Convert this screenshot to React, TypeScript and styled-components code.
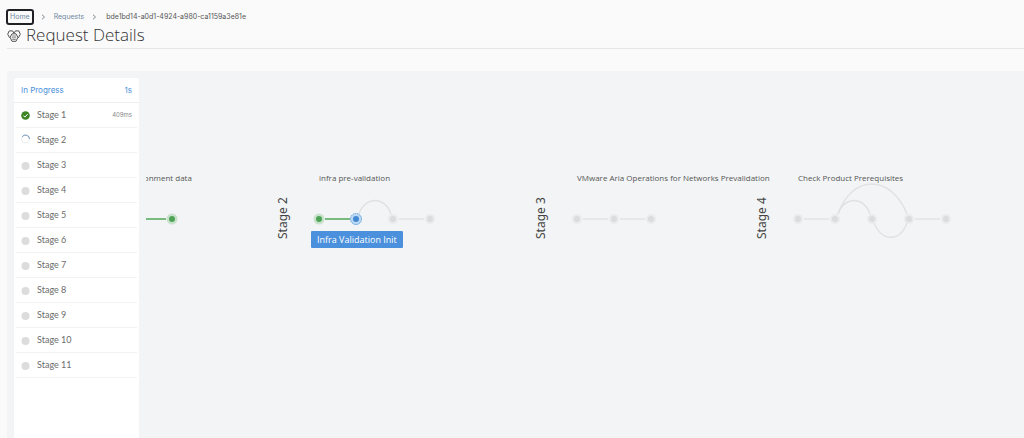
import React from "react";
import styled, { createGlobalStyle } from "styled-components";

const GlobalStyle = createGlobalStyle`
  * { box-sizing: border-box; }
  body {
    margin: 0;
    background: #fafafa;
    color: #565656;
    font-family: "Open Sans", "Noto Sans", sans-serif;
  }
`;

const Page = styled.div`
  display: flex;
  flex-direction: column;
  min-height: 100vh;
  padding-left: 7px;
`;

const Breadcrumb = styled.nav`
  display: flex;
  align-items: center;
  gap: 8px;
  height: 16px;
  margin-top: 9px;
  font: 7px/14px Inter, sans-serif;
`;

const Crumb = styled.a`
  color: #7189a0;
  text-decoration: none;
`;

const HomeCrumb = styled(Crumb)`
  padding: 0 3px;
  border-radius: 2px;
  outline: 2px solid #202124;
  outline-offset: -1px;
`;

const CurrentCrumb = styled.span`
  padding-left: 1px;
  color: #555;
`;

const Heading = styled.header`
  display: flex;
  align-items: center;
  gap: 5px;
  height: 24px;
  border-bottom: 1px solid #e6e6e6;
`;

const Title = styled.h1`
  margin: 0;
  padding-bottom: 4px;
  color: #333;
  font: 300 17px/20px "Open Sans", sans-serif;
`;

const HeadingIcon = styled.svg`
  width: 14px;
  height: 14px;
  margin-bottom: 2px;
`;

const Workspace = styled.main`
  display: flex;
  flex: 1;
  gap: 7px;
  margin-top: 22px;
  padding: 7px 0 0 7px;
  background: #f2f4f5;
`;

const Sidebar = styled.aside`
  flex: 0 0 125px;
  background: #fff;
  border-radius: 3px 3px 0 0;
`;

const StatusRow = styled.div`
  display: flex;
  justify-content: space-between;
  height: 25px;
  padding: 0 7px;
  border-bottom: 1px solid #eee;
  color: #4a90dc;
  font: 8px/24px Inter, sans-serif;
`;

const StageList = styled.ol`
  margin: 0;
  padding: 0 2px;
  list-style: none;
`;

const StageItem = styled.li`
  display: flex;
  align-items: center;
  gap: 7px;
  height: 25px;
  padding: 0 5px;
  border-bottom: 1px solid #f2f2f2;
  color: #6c6c6c;
  font: 9px/24px Lato, sans-serif;
`;

const StageIcon = styled.svg`
  width: 9px;
  height: 9px;
  overflow: visible;
`;

const Duration = styled.span`
  margin-left: auto;
  color: #888;
  font: 6px/12px Inter, sans-serif;
`;

const Canvas = styled.section`
  position: relative;
  flex: 1;
  overflow: hidden;
`;

const StageGroup = styled.div<{ $x: number }>`
  position: absolute;
  top: 93px;
  left: ${(p) => p.$x}px;
  display: grid;
  grid-template-columns: 16px auto;
  column-gap: 28px;
  white-space: nowrap;
`;

const StageName = styled.h2`
  grid-row: 1 / 3;
  margin: 23px 0 0;
  height: 48px;
  color: #444;
  font: 400 12px/16px "Noto Sans", sans-serif;
  text-align: center;
  writing-mode: vertical-rl;
  transform: rotate(180deg);
`;

const TaskTitle = styled.h3`
  margin: 0;
  font: 400 8px/14px "Open Sans", sans-serif;
`;

const Graph = styled.svg`
  display: block;
  height: 64px;
  margin: -6px 0 0 -8px;
  overflow: visible;
`;

const NodeLabel = styled.div`
  position: absolute;
  top: 60px;
  left: 36px;
  padding: 0 6px;
  border-radius: 1px;
  background: #4a90dc;
  color: #fff;
  font: 9px/17px "Open Sans", sans-serif;
`;

type State = "done" | "active" | "pending";
const nodeColors: Record<State, { core: string; halo: string }> = {
  done: { core: "#4fa356", halo: "#c9e2cc" },
  active: { core: "#4289d2", halo: "#bdd9f3" },
  pending: { core: "#dadcdd", halo: "#e9ebec" },
};

const NODE_GAP = 37;
const NODE_Y = 40;
const nodeX = (i: number) => 8 + i * NODE_GAP;

interface Stage {
  name: string;
  title: string;
  x: number;
  nodes: State[];
  links: number[];
  curves?: string[];
  label?: string;
}

const stages: Stage[] = [
  {
    name: "Stage 1",
    title: "Collect environment data",
    x: -92,
    nodes: ["done", "done", "done"],
    links: [0, 1],
  },
  {
    name: "Stage 2",
    title: "infra pre-validation",
    x: 129,
    nodes: ["done", "active", "pending", "pending"],
    links: [0, 2],
    curves: ["M48 35C54 17 74 17 80 35"],
    label: "Infra Validation Init",
  },
  {
    name: "Stage 3",
    title: "VMware Aria Operations for Networks Prevalidation",
    x: 387,
    nodes: ["pending", "pending", "pending"],
    links: [0, 1],
  },
  {
    name: "Stage 4",
    title: "Check Product Prerequisites",
    x: 608,
    nodes: ["pending", "pending", "pending", "pending", "pending"],
    links: [0, 3],
    curves: ["M48 35C54 17 74 17 80 35", "M48 35C62 -5 101 -5 117 35", "M84 44C92 63 110 63 117 44"],
  },
];

function StageGraph({ stage }: { stage: Stage }) {
  return (
    <Graph width={nodeX(stage.nodes.length - 1) + 8} aria-hidden="true">
      {stage.curves?.map((d) => (
        <path key={d} d={d} fill="none" stroke="#dfe1e2" strokeWidth="1.3" />
      ))}
      {stage.links.map((i) => (
        <line
          key={i}
          x1={nodeX(i) + 6}
          x2={nodeX(i + 1) - 6}
          y1={NODE_Y}
          y2={NODE_Y}
          stroke={stage.nodes[i] === "done" ? "#79ba7f" : "#dfe1e2"}
          strokeWidth={stage.nodes[i] === "done" ? 2 : 1.3}
        />
      ))}
      {stage.nodes.map((state, i) => (
        <g key={i}>
          <circle
            cx={nodeX(i)}
            cy={NODE_Y}
            r={state === "pending" ? 5 : 5.5}
            fill={nodeColors[state].halo}
            stroke={state === "active" ? "#5c9fe0" : "none"}
            strokeDasharray="1.5 0.7"
          />
          <circle cx={nodeX(i)} cy={NODE_Y} r="3" fill={nodeColors[state].core} />
        </g>
      ))}
    </Graph>
  );
}

function StatusIcon({ index }: { index: number }) {
  return (
    <StageIcon viewBox="0 0 9 9" aria-hidden="true">
      {index === 1 && (
        <>
          <circle cx="4.5" cy="4.5" r="4.3" fill="#3c8424" />
          <path d="M2.4 4.6l1.5 1.5 2.8-3" fill="none" stroke="#fff" />
        </>
      )}
      {index === 2 && (
        <>
          <circle cx="4.5" cy="3" r="4" fill="none" stroke="#e9ecee" />
          <path d="M1.2 .8A4 4 0 0 1 8.5 3" fill="none" stroke="#6e96b8" />
        </>
      )}
      {index > 2 && <circle cx="4.5" cy="5" r="4" fill="#dcdcdc" />}
    </StageIcon>
  );
}

function Chevron() {
  return (
    <svg width="5" height="6" viewBox="0 0 5 6" aria-hidden="true">
      <path d="M1 .7L3.5 3 1 5.3" fill="none" stroke="#7d8890" />
    </svg>
  );
}

export default function App() {
  return (
    <>
      <GlobalStyle />
      <Page>
        <Breadcrumb aria-label="Breadcrumb">
          <HomeCrumb href="#home">Home</HomeCrumb>
          <Chevron />
          <Crumb href="#requests">Requests</Crumb>
          <Chevron />
          <CurrentCrumb>bde1bd14-a0d1-4924-a980-ca1159a3e81e</CurrentCrumb>
        </Breadcrumb>
        <Heading>
          <HeadingIcon
            viewBox="0 0 14 14"
            fill="none"
            stroke="#555"
            strokeLinejoin="round"
            aria-hidden="true"
          >
            <path d="M3.2 8.4H2.4L.7 5.2 2.2 1.9h3.4L7 4.2" />
            <path d="M10.8 8.4h.8l1.7-3.2-1.5-3.3H8.4L7 4.2" />
            <path d="M5 4.8h4l1.9 3.5L9 12.3H5L3.1 8.3z" />
            <path d="M4.9 7h4.2M4.9 8.8h4.2M5.3 10.5h3.4" stroke="#888" />
          </HeadingIcon>
          <Title>Request Details</Title>
        </Heading>
        <Workspace>
          <Sidebar>
            <StatusRow>
              <span>In Progress</span>
              <span>1s</span>
            </StatusRow>
            <StageList>
              {Array.from({ length: 11 }, (_, i) => i + 1).map((n) => (
                <StageItem key={n}>
                  <StatusIcon index={n} />
                  <span>Stage {n}</span>
                  {n === 1 && <Duration>409ms</Duration>}
                </StageItem>
              ))}
            </StageList>
          </Sidebar>
          <Canvas aria-label="Request flow">
            {stages.map((stage) => (
              <StageGroup key={stage.name} $x={stage.x}>
                <StageName>{stage.name}</StageName>
                <TaskTitle>{stage.title}</TaskTitle>
                <StageGraph stage={stage} />
                {stage.label && <NodeLabel>{stage.label}</NodeLabel>}
              </StageGroup>
            ))}
          </Canvas>
        </Workspace>
      </Page>
    </>
  );
}
